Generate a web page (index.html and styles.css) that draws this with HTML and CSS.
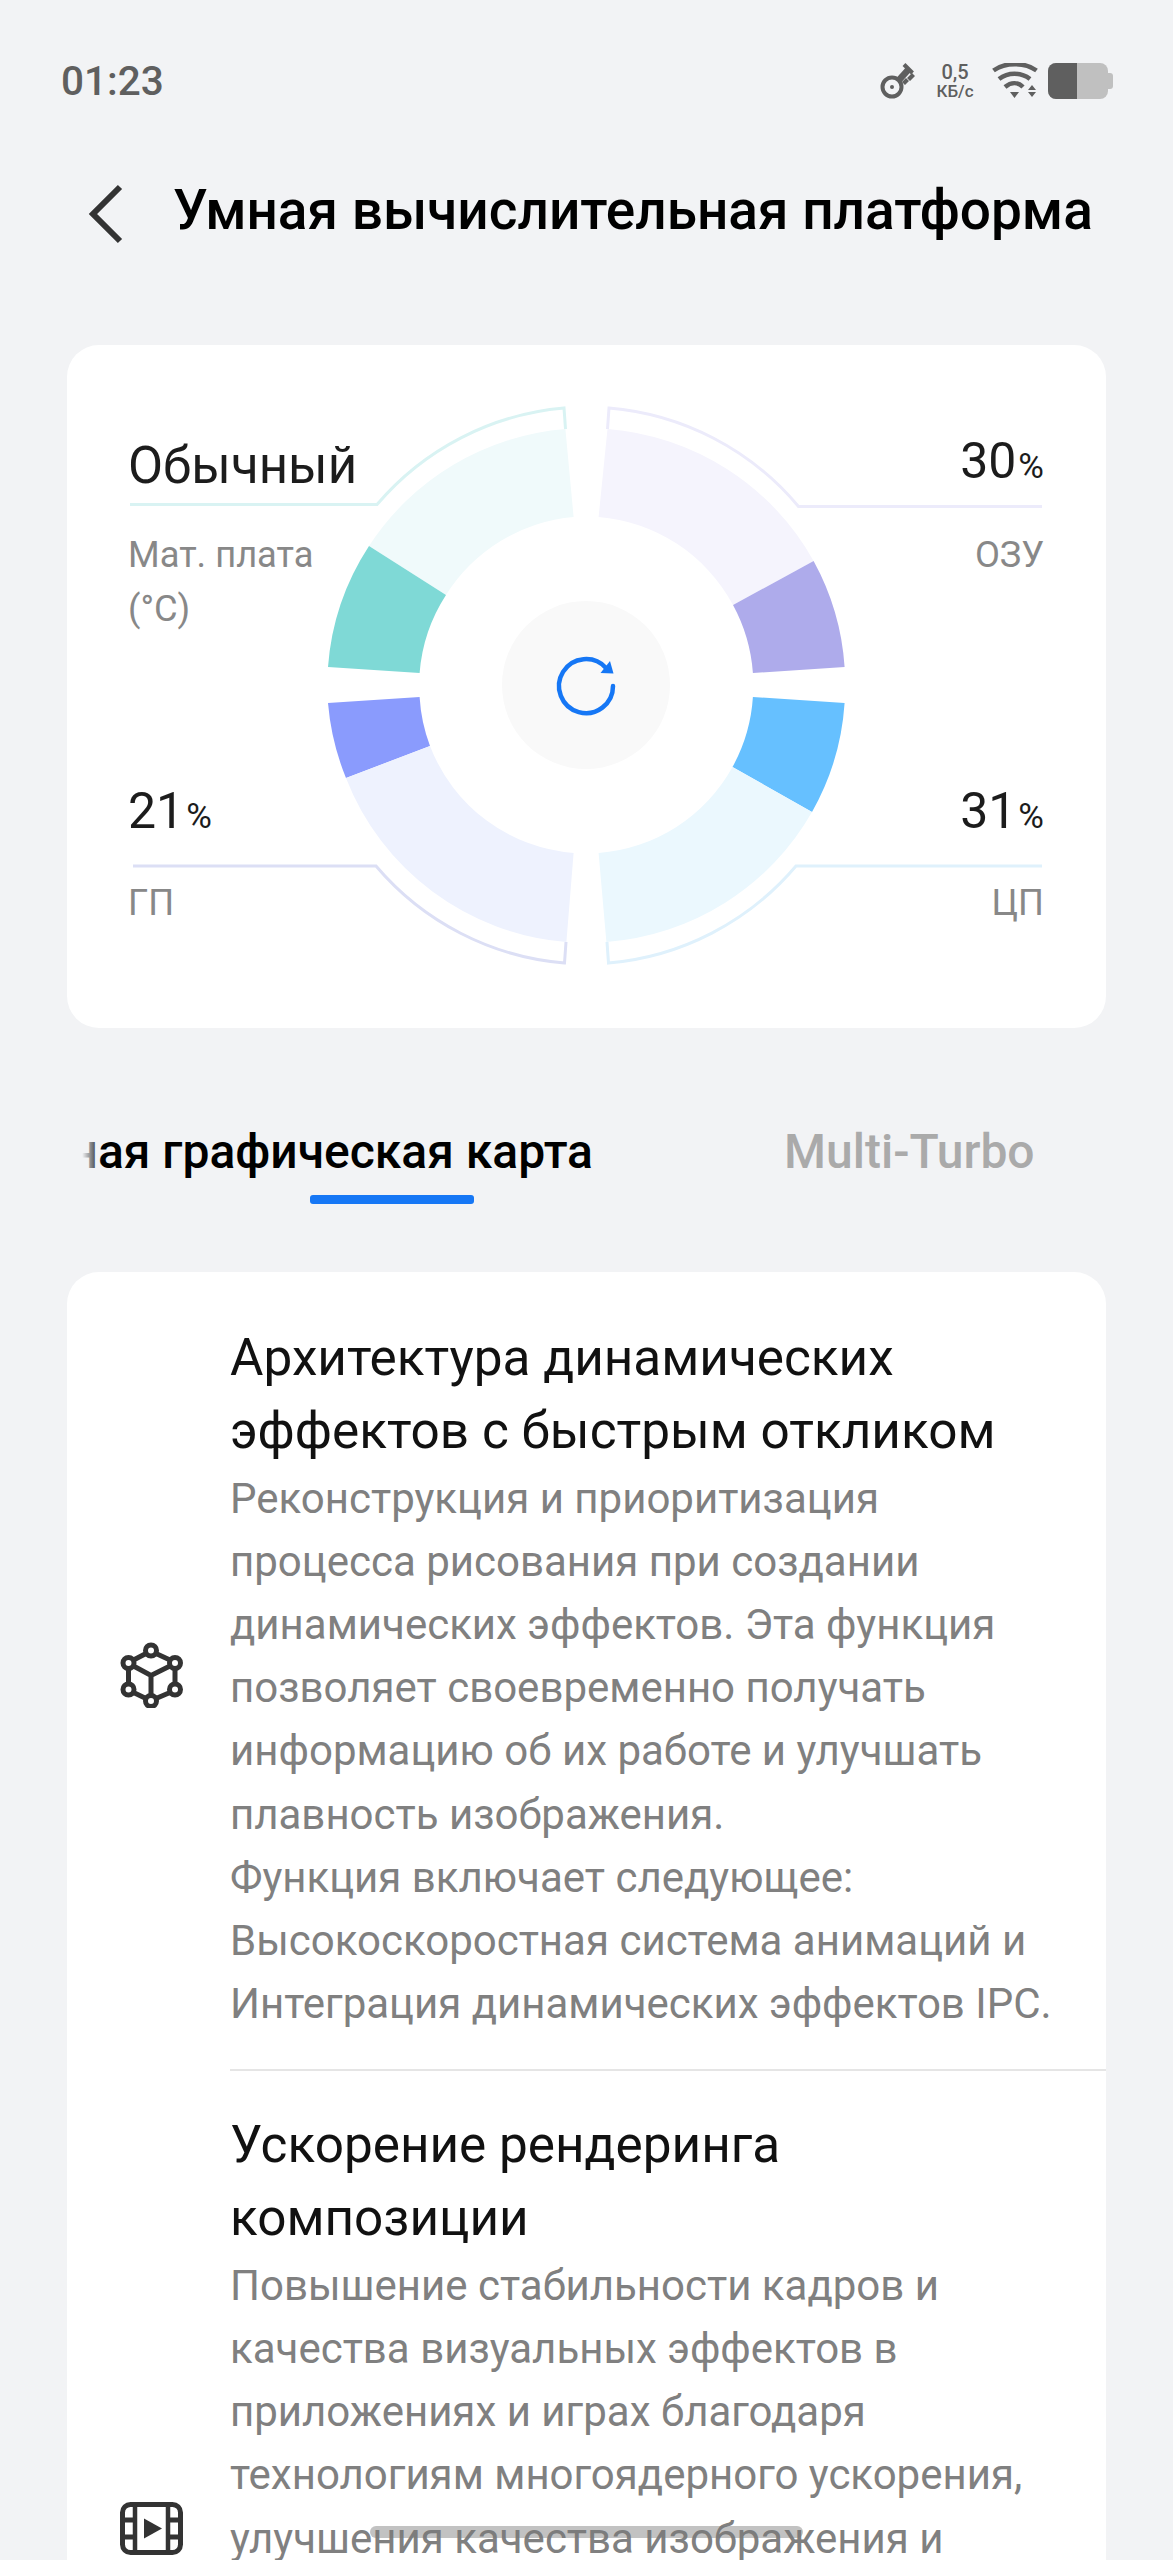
FILE: index.html
```html
<!DOCTYPE html>
<html lang="ru">
<head>
<meta charset="utf-8">
<title>Умная вычислительная платформа</title>
<link rel="stylesheet" href="styles.css">
</head>
<body>
<div class="phone">
  <header class="status">
    <span class="time">01:23</span>
    <div class="status-icons">
      <svg class="ico-key" width="36" height="36" viewBox="0 0 36 36" fill="none" stroke="#5f5f5f"><circle cx="12" cy="24" r="9.500" stroke-width="4"/><circle cx="12" cy="24" r="2" fill="#5f5f5f" stroke="none"/><path d="M19 17 28 7" stroke-width="6.500"/><path d="M24 1.500l8.500 8.500" stroke-width="4"/><path d="M32 10l3 3-5 5-3-3zM26 15l3 3-4 4-3-3z" fill="#5f5f5f" stroke="none"/></svg>
      <div class="net"><span>0,5</span><span class="net-unit">КБ/с</span></div>
      <svg class="ico-wifi" width="46" height="36" viewBox="0 0 46 36" fill="#5f5f5f"><path d="M1.500 7.500C13-1 33-1 44.500 7.500" stroke="#5f5f5f" stroke-width="4.500" fill="none"/><path d="M7 16C16 9 29 9 38 16" stroke="#5f5f5f" stroke-width="4.500" fill="none"/><path d="M13 24C19 19 26 19 31 24" stroke="#5f5f5f" stroke-width="4.500" fill="none"/><path d="M18 29h9l-4.500 6zM36 27l4-5 4 5zM36 29h8l-4 5z"/></svg>
      <div class="battery"><div class="battery-body"><div class="battery-fill"></div></div><div class="battery-cap"></div></div>
    </div>
  </header>

  <div class="titlebar">
    <svg class="back" width="36" height="60" viewBox="0 0 36 60" fill="none"><path d="M32 3 5 30l27 27" stroke="#333" stroke-width="6"/></svg>
    <h1>Умная вычислительная платформа</h1>
  </div>

  <section class="gauge">
    <svg class="dial" width="1039" height="683" viewBox="67 345 1039 683" fill="none">
      <path d="M130 504.500H377A277 277 0 0 1 564 408L565.500 429" stroke="#d9f3f3" stroke-width="3"/>
      <path d="M607.500 429 609 408A277 277 0 0 1 798.500 506.500H1042" stroke="#ecebfb" stroke-width="3"/>
      <path d="M133 866H376A277 277 0 0 0 564.500 963L566 942" stroke="#dcdff5" stroke-width="3"/>
      <path d="M1042 866H796A277 277 0 0 1 608.500 963L607 942" stroke="#dff1fc" stroke-width="3"/>
      <path fill="#f0fafb" d="M369 546A259 257 0 0 1 565.400 429L573.600 517A167.500 167.500 0 0 0 446 595Z"/>
      <path fill="#7fd9d6" d="M328 667A259 257 0 0 1 369 546L446 595A167.500 167.500 0 0 0 419.600 673Z"/>
      <path fill="#f5f4fd" d="M607.500 429A259 257 0 0 1 813.600 561L733 605A167.500 167.500 0 0 0 598.600 517Z"/>
      <path fill="#aeabeb" d="M813.600 561A259 257 0 0 1 844.600 667L752.900 673A167.500 167.500 0 0 0 733 605Z"/>
      <path fill="#8a9bfd" d="M328 703A259 257 0 0 0 346 778L430 746A167.500 167.500 0 0 1 419.600 697Z"/>
      <path fill="#eef2fe" d="M346 778A259 257 0 0 0 566.400 942L573.600 853A167.500 167.500 0 0 1 430 746Z"/>
      <path fill="#66c0ff" d="M844.600 703A259 257 0 0 1 812 812L732.500 767A167.500 167.500 0 0 0 752.900 697Z"/>
      <path fill="#ebf8fe" d="M812 812A259 257 0 0 1 606.400 942L598.600 853A167.500 167.500 0 0 0 732.500 767Z"/>
      <circle cx="586" cy="685" r="84" fill="#f9f9f9"/>
      <path d="M613 686A27 27 0 1 1 606 668" stroke="#1677f5" stroke-width="4.500" stroke-linecap="round"/>
      <path d="M600.500 673 613.500 673.500 610 661Z" fill="#1677f5"/>
    </svg>
    <div class="metric m-tl">
      <div class="value">Обычный</div>
      <div class="label">Мат. плата<br>(°C)</div>
    </div>
    <div class="metric m-tr">
      <div class="value value-num">30<small>%</small></div>
      <div class="label">ОЗУ</div>
    </div>
    <div class="metric m-bl">
      <div class="value value-num">21<small>%</small></div>
      <div class="label">ГП</div>
    </div>
    <div class="metric m-br">
      <div class="value value-num">31<small>%</small></div>
      <div class="label">ЦП</div>
    </div>
  </section>

  <nav class="tabs">
    <div class="tab-active">
      <span class="tab-text">Виртуальная графическая карта</span>
      <span class="tab-bar"></span>
    </div>
    <span class="tab">Multi-Turbo</span>
  </nav>

  <section class="list">
    <article class="row row-first">
      <div class="row-icon">
        <svg width="64" height="66" viewBox="0 0 64 66" fill="none" stroke="#333" stroke-width="5"><circle cx="31" cy="8.500" r="5.500"/><circle cx="8.500" cy="21" r="5.500"/><circle cx="55" cy="21" r="5.500"/><circle cx="8.500" cy="47.500" r="5.500"/><circle cx="55" cy="47.500" r="5.500"/><circle cx="31" cy="59" r="5.500"/><path d="M26 11.500 13.500 18M36 11.500 50 18M8.500 26.500v15.500M55 26.500v15.500M13.500 50.500 26 56.500M50 50.500 36 56.500M13.500 24 31 33.500 50 24M31 33.500V53.500"/></svg>
      </div>
      <div class="row-text">
        <h2>Архитектура динамических эффектов с быстрым откликом</h2>
        <p>Реконструкция и приоритизация процесса рисования при создании динамических эффектов. Эта функция позволяет своевременно получать информацию об их работе и улучшать плавность изображения.<br>Функция включает следующее:<br>Высокоскоростная система анимаций и Интеграция динамических эффектов IPC.</p>
      </div>
    </article>
    <article class="row row-tall">
      <div class="row-icon">
        <svg width="64" height="54" viewBox="0 0 64 54" fill="none" stroke="#333" stroke-width="5"><rect x="2.500" y="2.500" width="58" height="48" rx="8"/><path d="M15 2.500v48M48 2.500v48" stroke-width="4.500"/><path d="M2.500 18h12M2.500 35h12M48 18h12M48 35h12" stroke-width="5"/><path d="M24 16.500 42 26.500 24 36.500Z" fill="#333" stroke="none"/></svg>
      </div>
      <div class="row-text">
        <h2>Ускорение рендеринга композиции</h2>
        <p>Повышение стабильности кадров и качества визуальных эффектов в приложениях и играх благодаря технологиям многоядерного ускорения, улучшения качества изображения и</p>
      </div>
    </article>
  </section>

  <div class="home-bar"></div>
</div>
</body>
</html>
```
FILE: styles.css
```css
* { box-sizing: border-box; }
html, body { margin: 0; padding: 0; height: 2560px; overflow: hidden; background: #f2f3f5; }
body { font-family: Roboto, "Noto Sans", sans-serif; color: #111; }
.phone { position: relative; width: 1173px; height: 2560px; overflow: hidden; }

.status { display: flex; justify-content: space-between; align-items: center; height: 66px; margin-top: 48px; padding: 0 60px 0 61px; }
.time { font-size: 40.5px; font-weight: 500; color: #5f5f5f; }
.status-icons { display: flex; align-items: center; }
.net { display: flex; flex-direction: column; align-items: center; font-size: 20px; line-height: 20px; font-weight: 500; color: #5f5f5f; width: 38px; margin: 0 18px 0 20px; }
.net-unit { font-size: 17px; line-height: 18px; white-space: nowrap; }
.battery { display: flex; align-items: center; margin-left: 10px; }
.battery-body { width: 60px; height: 36px; border-radius: 8px; background: #c0c0c0; overflow: hidden; }
.battery-fill { width: 29px; height: 100%; background: #5f5f5f; }
.battery-cap { width: 5px; height: 16px; background: #c0c0c0; border-radius: 0 3px 3px 0; }

.titlebar { display: flex; align-items: center; gap: 49px; height: 64px; margin-top: 68px; padding-left: 88px; }
h1 { margin: 0 0 8px; font-size: 55px; font-weight: 500; color: #000; white-space: nowrap; }

.gauge { position: relative; height: 683px; margin: 99px 67px 0; background: #fff; border-radius: 32px; }
.dial { position: absolute; left: 0; top: 0; }
.metric { position: absolute; font-size: 36.3px; color: #888; }
.m-tl { left: 61px; top: 93px; }
.m-tr { right: 62px; top: 88px; text-align: right; }
.m-bl { left: 61px; top: 438px; }
.m-br { right: 62px; top: 438px; text-align: right; }
.value { font-size: 51px; line-height: 56px; color: #1c1c1c; }
.value-num { font-size: 50px; }
.value small { font-size: 35px; margin-left: 2px; }
.label { line-height: 54px; }
.m-tl .label { margin-top: 34px; }
.m-tr .label { margin-top: 33px; }
.m-bl .label, .m-br .label { margin-top: 31px; }

.tabs { display: flex; align-items: flex-start; height: 147.5px; margin: 96px 120px 0 80px; overflow: hidden; font-size: 48px; font-weight: 500; position: relative; }
.tabs::before { content: ""; position: absolute; left: 0; top: 0; width: 22px; height: 60px; background: linear-gradient(90deg, #f2f3f5 10%, rgba(242,243,245,0)); z-index: 1; }
.tab-active { flex: 0 0 513px; display: flex; flex-direction: column; align-items: flex-end; overflow: hidden; color: #000; }
.tab-text { white-space: nowrap; line-height: 56px; }
.tab-bar { align-self: flex-start; width: 164px; height: 9px; margin: 15px 0 0 230px; background: #1677f5; border-radius: 3px; }
.tab { margin-left: 191px; line-height: 56px; color: #aaa; white-space: nowrap; }

.list { margin: 0 67px; background: #fff; border-radius: 32px 32px 0 0; }
.row { display: flex; align-items: center; padding-left: 53px; }
.row-tall { min-height: 907px; }
.row-icon { flex: 0 0 110px; display: flex; margin-top: 8px; }
.row-text { flex: 1; padding: 49px 46px 34px 0; border-bottom: 2px solid #e5e5e5; }
.row-tall .row-text { align-self: flex-start; padding-top: 36.5px; border-bottom: 0; }
h2 { margin: 0; font-size: 51.3px; line-height: 73px; font-weight: 400; color: #111; }
p { margin: 0; font-size: 42px; line-height: 63.2px; color: #808080; }

.home-bar { position: absolute; left: 370px; top: 2526px; width: 433px; height: 12px; border-radius: 6px; background: rgba(120,120,120,.45); }
```
